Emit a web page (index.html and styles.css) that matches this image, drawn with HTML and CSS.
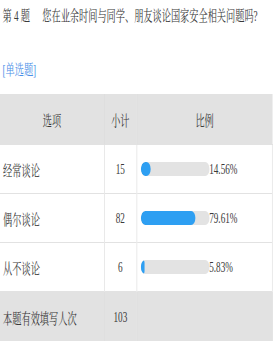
FILE: index.html
```html
<!DOCTYPE html>
<html lang="zh-CN">
<head>
<meta charset="utf-8">
<title>第 4 题</title>
<link rel="stylesheet" href="styles.css">
</head>
<body>
<div class="page">
  <div class="title"><span class="qno">第 4 题</span>您在业余时间与同学、朋友谈论国家安全相关问题吗?</div>
  <div class="qtype">[单选题]</div>
  <table class="stats">
    <colgroup><col class="c1"><col class="c2"><col class="c3"></colgroup>
    <thead>
      <tr><th>选项</th><th>小计</th><th>比例</th></tr>
    </thead>
    <tbody>
      <tr>
        <td class="opt">经常谈论</td><td class="num">15</td>
        <td class="pct"><div class="barwrap"><div class="track"><div class="fill" style="width:14.56%"></div></div><span>14.56%</span></div></td>
      </tr>
      <tr>
        <td class="opt">偶尔谈论</td><td class="num">82</td>
        <td class="pct"><div class="barwrap"><div class="track"><div class="fill" style="width:79.61%"></div></div><span>79.61%</span></div></td>
      </tr>
      <tr>
        <td class="opt">从不谈论</td><td class="num">6</td>
        <td class="pct"><div class="barwrap"><div class="track"><div class="fill" style="width:5.83%"></div></div><span>5.83%</span></div></td>
      </tr>
      <tr class="total">
        <td class="opt">本题有效填写人次</td><td class="num">103</td><td></td>
      </tr>
    </tbody>
  </table>
</div>
</body>
</html>
```
FILE: styles.css
```css
html, body {
  margin: 0;
  padding: 0;
  background: #fff;
  overflow: hidden;
}
.page {
  width: 446px;
  overflow: hidden;
  transform: scaleX(0.6125);
  transform-origin: 0 0;
  font-family: "Liberation Serif", "Noto Serif CJK SC", "Noto Sans CJK SC", serif;
  font-size: 15px;
  color: #3a3a3a;
}
.title {
  padding: 6px 0 0 4px;
  line-height: 20px;
  white-space: nowrap;
}
.qno {
  display: inline-block;
  margin-right: 20px;
}
.qtype {
  margin-top: 34px;
  padding-left: 4px;
  line-height: 20px;
  color: #4a8fe8;
}
.stats {
  margin-top: 14px;
  width: 445px;
  border-collapse: collapse;
  table-layout: fixed;
}
.c1 { width: 170px; }
.c2 { width: 53px; }
.stats th {
  height: 50px;
  padding: 0;
  background: #e2e2e2;
  font-weight: normal;
  text-align: center;
  border-left: 1px solid #dadada;
}
.stats th:first-child { border-left: none; }
.stats td {
  height: 48px;
  padding: 0;
  border-top: 1px solid #e2e2e2;
  border-left: 1px solid #dcdcdc;
  border-right: 1px solid #dcdcdc;
}
.stats td:first-child { border-left: none; }
.opt {
  padding-left: 5px !important;
  text-align: left;
}
.num { text-align: center; }
.pct { padding-left: 6px !important; }
.barwrap {
  display: flex;
  align-items: center;
}
.track {
  width: 112px;
  height: 14px;
  border-radius: 7px;
  background: #e3e3e3;
  overflow: hidden;
}
.fill {
  height: 100%;
  border-radius: 7px;
  background: #2e9ff2;
}
.total td {
  height: 50px;
  background: #e2e2e2;
}
```
